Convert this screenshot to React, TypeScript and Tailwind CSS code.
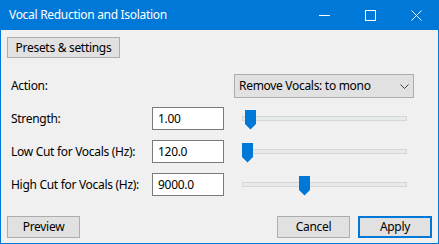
import React from "react";

const font = { fontFamily: '"Noto Sans", "Open Sans", sans-serif' };

function Thumb({ left }: { left: number }) {
  return (
    <svg
      width="11"
      height="20"
      viewBox="0 0 11 20"
      className="absolute top-[-7px]"
      style={{ left }}
    >
      <polygon points="0,0 11,0 11,14 5.5,19.5 0,14" fill="#0078d7" />
    </svg>
  );
}

function Slider({ pos }: { pos: number }) {
  return (
    <div className="relative w-[165px] h-[5px] border border-[#d6d6d6] bg-[#e7eaea]">
      <Thumb left={pos} />
    </div>
  );
}

const rows = [
  { label: "Strength:", value: "1.00", pos: 2 },
  { label: "Low Cut for Vocals (Hz):", value: "120.0", pos: -1 },
  { label: "High Cut for Vocals (Hz):", value: "9000.0", pos: 56 },
];

export default function App() {
  return (
    <div
      className="w-[439px] h-[244px] flex flex-col bg-[#f0f0f0] border-x border-b border-[#0078d7] text-[12px] tracking-[-0.3px] text-black overflow-hidden"
      style={font}
    >
      {/* title bar */}
      <div className="h-[30px] shrink-0 bg-[#0078d7] flex items-center -mx-px">
        <span className="pl-[9px] text-white text-[12px] flex-1">
          Vocal Reduction and Isolation
        </span>
        <div className="w-[46px] h-full flex items-center justify-center">
          <svg width="11" height="11" viewBox="0 0 11 11">
            <line x1="0" y1="5.5" x2="11" y2="5.5" stroke="white" strokeWidth="1" />
          </svg>
        </div>
        <div className="w-[46px] h-full flex items-center justify-center">
          <svg width="11" height="11" viewBox="0 0 11 11">
            <rect x="0.5" y="0.5" width="10" height="10" fill="none" stroke="white" strokeWidth="1" />
          </svg>
        </div>
        <div className="w-[46px] h-full flex items-center justify-center">
          <svg width="11" height="11" viewBox="0 0 11 11">
            <path d="M0.5 0.5 L10.5 10.5 M10.5 0.5 L0.5 10.5" stroke="white" strokeWidth="1" />
          </svg>
        </div>
      </div>

      <div className="flex-1 flex flex-col pl-[6px] pr-[6px]">
        <button className="mt-[7px] w-[113px] h-[21px] border border-[#adadad] bg-[#e1e1e1] flex items-center justify-center">
          Presets &amp; settings
        </button>

        <div className="mt-[16px] flex items-center h-[24px]">
          <span className="pl-[4px] w-[227px]">Action:</span>
          <div className="w-[180px] h-[24px] border border-[#adadad] bg-[#e1e1e1] flex items-center pl-[4px] pr-[4px]">
            <span className="flex-1">Remove Vocals: to mono</span>
            <svg width="9" height="5" viewBox="0 0 9 5">
              <path d="M0.5 0.5 L4.5 4.5 L8.5 0.5" fill="none" stroke="#404040" strokeWidth="1" />
            </svg>
          </div>
        </div>

        <div className="mt-[9px] flex flex-col gap-[10px]">
          {rows.map((r) => (
            <div key={r.label} className="flex items-center h-[23px]">
              <span className="pl-[4px] w-[145px]">{r.label}</span>
              <div className="w-[72px] h-[23px] border border-[#7a7a7a] bg-white flex items-center pl-[5px]">
                {r.value}
              </div>
              <div className="ml-[18px]">
                <Slider pos={r.pos} />
              </div>
            </div>
          ))}
        </div>

        <div className="mt-[20px] flex items-center">
          <button className="w-[73px] h-[22px] border border-[#adadad] bg-[#e1e1e1] flex items-center justify-center">
            Preview
          </button>
          <div className="flex-1" />
          <button className="w-[73px] h-[22px] border border-[#adadad] bg-[#e1e1e1] flex items-center justify-center">
            Cancel
          </button>
          <button className="ml-[8px] w-[74px] h-[22px] border-2 border-[#0078d7] bg-[#e1e1e1] flex items-center justify-center">
            Apply
          </button>
        </div>
      </div>
    </div>
  );
}
